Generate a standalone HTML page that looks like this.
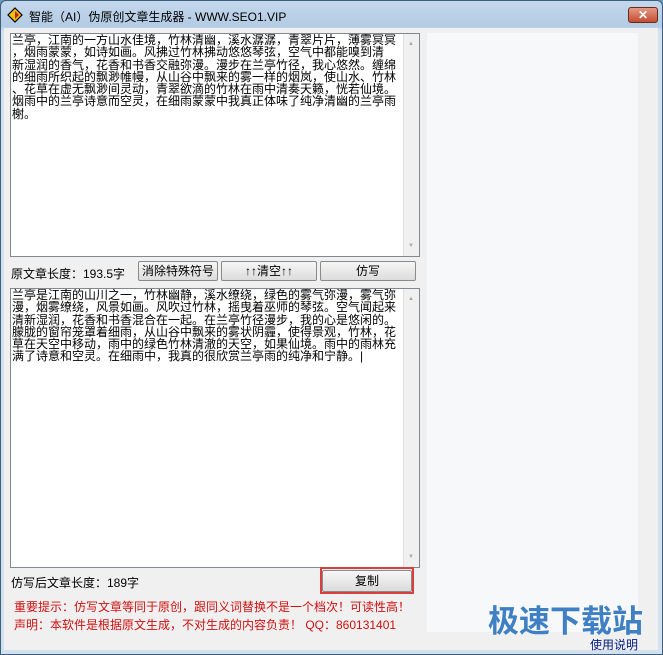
<!DOCTYPE html><html><head><meta charset="utf-8"><style>
*{margin:0;padding:0;box-sizing:border-box}
body{width:663px;height:655px;overflow:hidden;background:#6e9bbd;font-family:"Liberation Sans","Noto Sans CJK SC",sans-serif;font-size:12px;position:relative}
.win{position:absolute;left:0;top:0;width:663px;height:655px;background:linear-gradient(#c4d8ec,#b3cbe4 25px,#d3e1ef 30px);border:1px solid #3b5f7d;border-radius:6px 6px 0 0}
.title{position:absolute;left:28px;top:7px;font-size:12px;color:#000}
.close{position:absolute;left:627px;top:6px;width:30px;height:16px;background:linear-gradient(#e49a86,#c44c32);border:1px solid #6c2a1c;border-radius:3px;color:#fff;font-weight:bold;text-align:center;line-height:14px;font-size:12px}
.client{position:absolute;left:4px;top:28px;width:654px;height:622px;background:#f0f0f0}
.ta{position:absolute;background:#fff;border:1px solid #828790;padding:0 18px 0 1px;font-size:12px;line-height:12.3px;letter-spacing:0;color:#000;overflow:hidden;white-space:nowrap}
.sb{position:absolute;right:0;top:0;bottom:0;width:16px;background:#f0f0f0;border-left:1px solid #e0e0e0}
.sb:before{content:"▲";position:absolute;top:4px;left:4px;font-size:6px;color:#aaa}
.sb:after{content:"▼";position:absolute;bottom:4px;left:4px;font-size:6px;color:#aaa}
.lab{position:absolute;font-size:12px;color:#000}
.btn{position:absolute;height:20px;background:linear-gradient(#f6f6f6,#dcdcdc);border:1px solid #8a8a8a;border-radius:2px;text-align:center;line-height:18px;font-size:12px}
.red{position:absolute;color:#d01010;font-size:12px}
.panel{position:absolute;left:427px;top:33px;width:211px;height:599px;background:#f7f8fa}
</style></head><body>
<div class="win">
<svg style="position:absolute;left:6px;top:6px" width="16" height="16"><polygon points="8,1 15,8 8,15 1,8" fill="#f2c200" stroke="#000" stroke-width="1.2"/><polygon points="8,4 12,8 8,12" fill="#c02020"/></svg>
<div class="title">智能（AI）伪原创文章生成器 - WWW.SEO1.VIP</div>
<div class="close">✕</div>
</div>
<div class="client"></div>
<div class="panel"></div>
<div class="ta" style="left:10px;top:33px;width:410px;height:224px">兰亭，江南的一方山水佳境，竹林清幽，溪水潺潺，青翠片片，薄雾冥冥<br>，烟雨蒙蒙，如诗如画。风拂过竹林拂动悠悠琴弦，空气中都能嗅到清<br>新湿润的香气，花香和书香交融弥漫。漫步在兰亭竹径，我心悠然。缠绵<br>的细雨所织起的飘渺帷幔，从山谷中飘来的雾一样的烟岚，使山水、竹林<br>、花草在虚无飘渺间灵动，青翠欲滴的竹林在雨中清奏天籁，恍若仙境。<br>烟雨中的兰亭诗意而空灵，在细雨蒙蒙中我真正体味了纯净清幽的兰亭雨<br>榭。<div class="sb"></div></div>
<div class="lab" style="left:11px;top:265px">原文章长度：193.5字</div>
<div class="btn" style="left:138px;top:261px;width:80px">消除特殊符号</div>
<div class="btn" style="left:221px;top:261px;width:96px">↑↑清空↑↑</div>
<div class="btn" style="left:320px;top:261px;width:96px">仿写</div>
<div class="ta" style="left:10px;top:288px;width:410px;height:280px">兰亭是江南的山川之一，竹林幽静，溪水缭绕，绿色的雾气弥漫，雾气弥<br>漫，烟雾缭绕，风景如画。风吹过竹林，摇曳着巫师的琴弦。空气闻起来<br>清新湿润，花香和书香混合在一起。在兰亭竹径漫步，我的心是悠闲的。<br>朦胧的窗帘笼罩着细雨，从山谷中飘来的雾状阴霾，使得景观，竹林，花<br>草在天空中移动，雨中的绿色竹林清澈的天空，如果仙境。雨中的雨林充<br>满了诗意和空灵。在细雨中，我真的很欣赏兰亭雨的纯净和宁静。|<div class="sb"></div></div>
<div class="lab" style="left:11px;top:574px">仿写后文章长度：189字</div>
<div class="btn" style="left:322px;top:570px;width:90px;height:22px;line-height:20px">复制</div>
<div style="position:absolute;left:320px;top:567px;width:94px;height:27px;border:2px solid #d84040"></div>
<div class="red" style="left:14px;top:598px">重要提示：仿写文章等同于原创，跟同义词替换不是一个档次！可读性高！</div>
<div class="red" style="left:14px;top:616px">声明：本软件是根据原文生成，不对生成的内容负责！ QQ：860131401</div>
<div style="position:absolute;left:488px;top:604px;font-size:31px;font-weight:bold;color:#3f80c4;line-height:36px">极速下载站</div>
<div style="position:absolute;left:590px;top:636px;font-size:12px;color:#001a80">使用说明</div>
</body></html>
